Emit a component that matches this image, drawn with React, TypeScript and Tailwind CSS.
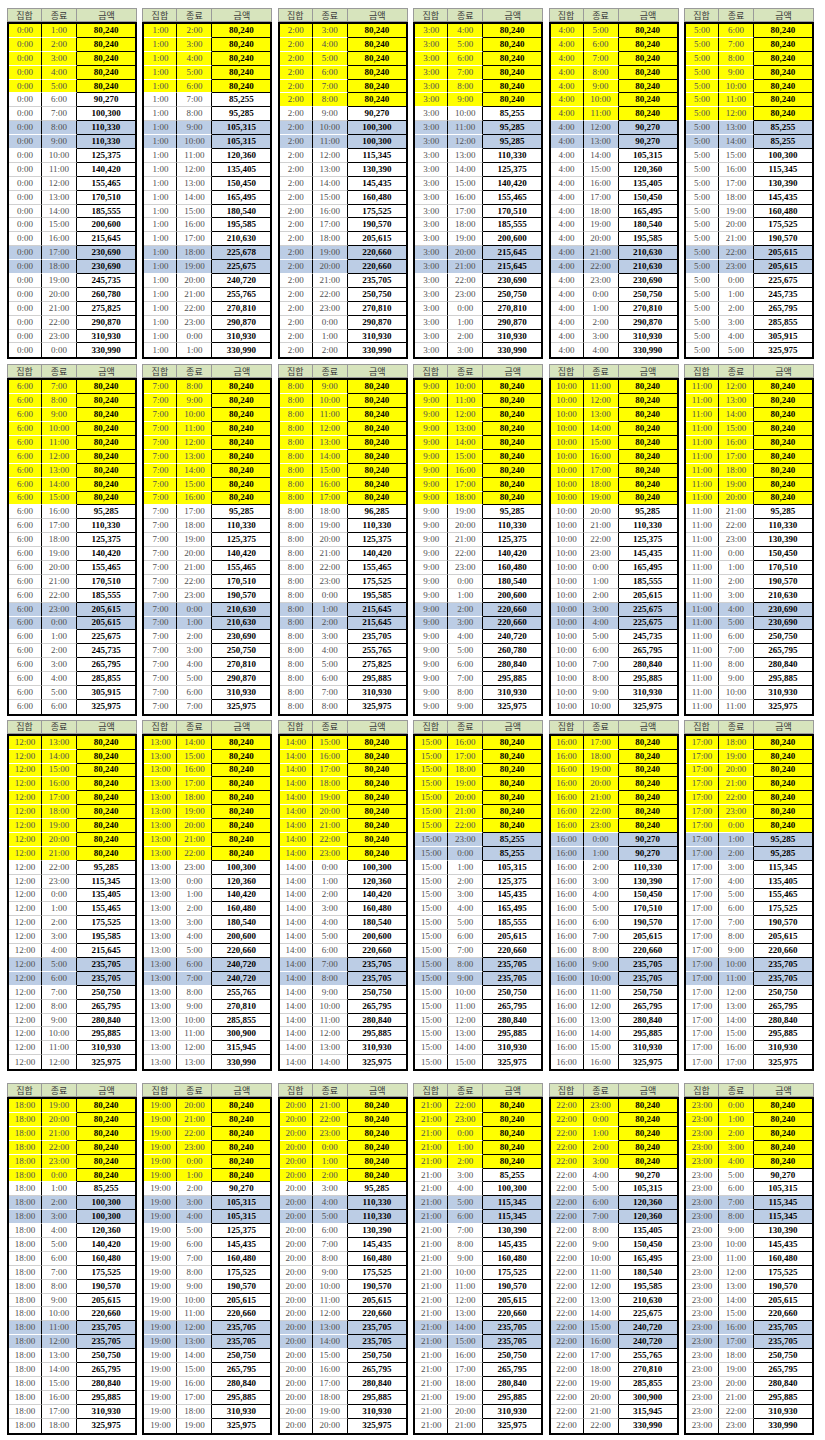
import React from "react";

const T: [number, number[]][] = [
  [5, [90270,100300,110330,110330,125375,140420,155465,170510,185555,200600,215645,230690,230690,245735,260780,275825,290870,310930,330990]],
  [5, [85255,95285,105315,105315,120360,135405,150450,165495,180540,195585,210630,225678,225675,240720,255765,270810,290870,310930,330990]],
  [6, [90270,100300,100300,115345,130390,145435,160480,175525,190570,205615,220660,220660,235705,250750,270810,290870,310930,330990]],
  [6, [85255,95285,95285,110330,125375,140420,155465,170510,185555,200600,215645,215645,230690,250750,270810,290870,310930,330990]],
  [7, [90270,90270,105315,120360,135405,150450,165495,180540,195585,210630,210630,230690,250750,270810,290870,310930,330990]],
  [7, [85255,85255,100300,115345,130390,145435,160480,175525,190570,205615,205615,225675,245735,265795,285855,305915,325975]],
  [9, [95285,110330,125375,140420,155465,170510,185555,205615,205615,225675,245735,265795,285855,305915,325975]],
  [9, [95285,110330,125375,140420,155465,170510,190570,210630,210630,230690,250750,270810,290870,310930,325975]],
  [9, [96285,110330,125375,140420,155465,175525,195585,215645,215645,235705,255765,275825,295885,310930,325975]],
  [9, [95285,110330,125375,140420,160480,180540,200600,220660,220660,240720,260780,280840,295885,310930,325975]],
  [9, [95285,110330,125375,145435,165495,185555,205615,225675,225675,245735,265795,280840,295885,310930,325975]],
  [9, [95285,110330,130390,150450,170510,190570,210630,230690,230690,250750,265795,280840,295885,310930,325975]],
  [9, [95285,115345,135405,155465,175525,195585,215645,235705,235705,250750,265795,280840,295885,310930,325975]],
  [9, [100300,120360,140420,160480,180540,200600,220660,240720,240720,255765,270810,285855,300900,315945,330990]],
  [9, [100300,120360,140420,160480,180540,200600,220660,235705,235705,250750,265795,280840,295885,310930,325975]],
  [7, [85255,85255,105315,125375,145435,165495,185555,205615,220660,235705,235705,250750,265795,280840,295885,310930,325975]],
  [7, [90270,90270,110330,130390,150450,170510,190570,205615,220660,235705,235705,250750,265795,280840,295885,310930,325975]],
  [7, [95285,95285,115345,135405,155465,175525,190570,205615,220660,235705,235705,250750,265795,280840,295885,310930,325975]],
  [6, [85255,100300,100300,120360,140420,160480,175525,190570,205615,220660,235705,235705,250750,265795,280840,295885,310930,325975]],
  [6, [90270,105315,105315,125375,145435,160480,175525,190570,205615,220660,235705,235705,250750,265795,280840,295885,310930,325975]],
  [6, [95285,110330,110330,130390,145435,160480,175525,190570,205615,220660,235705,235705,250750,265795,280840,295885,310930,325975]],
  [5, [85255,100300,115345,115345,130390,145435,160480,175525,190570,205615,220660,235705,235705,250750,265795,280840,295885,310930,325975]],
  [5, [90270,105315,120360,120360,135405,150450,165495,180540,195585,210630,225675,240720,240720,255765,270810,285855,300900,315945,330990]],
  [5, [90270,105315,115345,115345,130390,145435,160480,175525,190570,205615,220660,235705,235705,250750,265795,280840,295885,310930,330990]],
];

const fmt = (n: number) => n.toLocaleString("en-US");

function Table({ h }: { h: number }) {
  const [y, rest] = T[h];
  const amounts = [...Array(y).fill(80240), ...rest];
  const blue = new Set<number>(y < 9 ? [7, 8, 16, 17] : [16, 17]);
  return (
    <div className="flex w-[130px] flex-col">
      <div className="flex h-[14px] text-[9px] leading-none text-[#3a3a3a] [font-family:'Noto_Sans_CJK_KR',sans-serif]">
        <div className="flex w-[35px] items-center justify-center border border-[#9a9a9a] bg-[#d7e4bd]">집합</div>
        <div className="flex w-[35px] items-center justify-center border-y border-r border-[#9a9a9a] bg-[#d7e4bd]">종료</div>
        <div className="flex flex-1 items-center justify-center border-y border-r border-[#9a9a9a] bg-[#d7e4bd]">금액</div>
      </div>
      <div className="flex flex-col border-2 border-black [font-family:'Liberation_Serif',serif]">
        {amounts.map((a, i) => {
          const isY = i < y;
          const isB = blue.has(i);
          const bg = isY ? "bg-[#ffff00]" : isB ? "bg-[#bccde5]" : "bg-white";
          const sep = isY || isB ? "border-b-white" : "border-b-[#d0d0d0]";
          const last = i === amounts.length - 1;
          return (
            <div key={i} className={`flex h-[13.9px] ${bg}`}>
              <div className={`flex w-[33px] items-center justify-center border-r border-r-black ${last ? "" : `border-b ${sep}`} text-[9px] leading-none text-[#505050]`}>
                {h}:00
              </div>
              <div className={`flex w-[35px] items-center justify-center border-r-[1.5px] border-r-black ${last ? "" : `border-b ${sep}`} text-[9px] leading-none text-[#505050]`}>
                {(h + i + 1) % 24}:00
              </div>
              <div className={`flex flex-1 items-center justify-center ${last ? "" : "border-b border-b-black"} text-[9px] font-bold leading-none text-black`}>
                {fmt(a)}
              </div>
            </div>
          );
        })}
      </div>
    </div>
  );
}

function Block({ start, className }: { start: number; className: string }) {
  return (
    <div className={`flex gap-[5.4px] pl-[7px] ${className}`}>
      {[0, 1, 2, 3, 4, 5].map((k) => (
        <Table key={k} h={start + k} />
      ))}
    </div>
  );
}

export default function App() {
  return (
    <div className="flex h-[1440px] w-[825px] flex-col overflow-hidden bg-white">
      <Block start={0} className="mt-[8px]" />
      <Block start={6} className="mt-[5px]" />
      <Block start={12} className="mt-[4px]" />
      <Block start={18} className="mt-[12px]" />
    </div>
  );
}
